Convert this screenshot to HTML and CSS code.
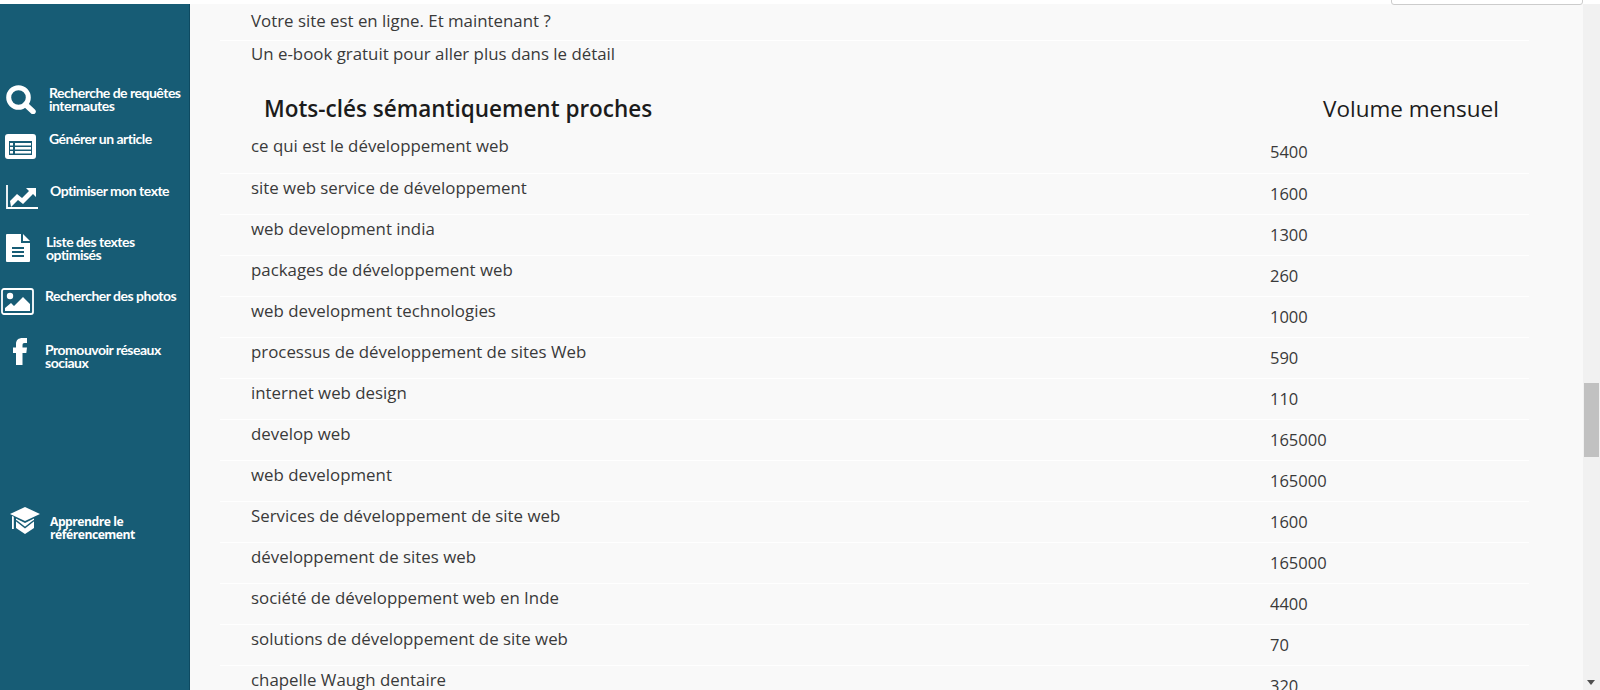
FILE: index.html
```html
<!DOCTYPE html>
<html lang="fr">
<head>
    <meta charset="UTF-8">
    <title>Mots-clés sémantiquement proches</title>
    <link rel="stylesheet" href="styles.css">
</head>
<body>
    <div class="topbar">
        <div class="searchBox"></div>
    </div>
    <div class="page">
        <nav class="sidebar">
            <a class="navItem search">
                <svg class="navIcon" width="30" height="29" viewBox="0 0 30 29"><circle cx="12.500" cy="12.500" r="9.800" fill="none" stroke="#fff" stroke-width="5"/><path d="M19.500 19.500l7.500 7" stroke="#fff" stroke-width="5.500" stroke-linecap="round"/></svg>
                <span class="navLabel">Recherche de requêtes internautes</span>
            </a>
            <a class="navItem article">
                <svg class="navIcon" width="31" height="25" viewBox="0 0 31 25"><rect width="31" height="25" rx="3" fill="#fff"/><path d="M4 7h23v14H4z" fill="#175c75"/><path d="M5 9h3v2.500H5zM10 9h16v2.500H10zM5 13h3v2.500H5zM10 13h16v2.500H10zM5 17h3v2.500H5zM10 17h16v2.500H10z" fill="#fff"/></svg>
                <span class="navLabel">Générer un article</span>
            </a>
            <a class="navItem chart">
                <svg class="navIcon" width="32" height="24" viewBox="0 0 32 24"><path d="M1 0v23h31" fill="none" stroke="#fff" stroke-width="1.800"/><path d="M4 16l7-7 5 4 7-7-3-3h10v9l-3-3-10 10-5-4-7 7z" fill="#fff"/></svg>
                <span class="navLabel">Optimiser mon texte</span>
            </a>
            <a class="navItem list">
                <svg class="navIcon" width="24" height="28" viewBox="0 0 24 28"><path d="M1 0h14v9h9v18a1 1 0 0 1-1 1H1a1 1 0 0 1-1-1V1a1 1 0 0 1 1-1z" fill="#fff"/><path d="M17 0l7 7h-7z" fill="#fff"/><path d="M6 13h12v2H6zM6 17h12v2H6zM6 21h12v2H6z" fill="#175c75"/></svg>
                <span class="navLabel">Liste des textes optimisés</span>
            </a>
            <a class="navItem photos">
                <svg class="navIcon" width="33" height="27" viewBox="0 0 33 27"><rect x="1" y="1" width="31" height="25" rx="2" fill="none" stroke="#fff" stroke-width="1.800"/><circle cx="9" cy="8" r="3.200" fill="#fff"/><path d="M4 23v-3l6-5 3 3 9-9 7 7v7z" fill="#fff"/></svg>
                <span class="navLabel">Rechercher des photos</span>
            </a>
            <a class="navItem facebook">
                <svg class="navIcon" width="14" height="27" viewBox="0 0 14 27"><path d="M3 27V15H0V9.500h3V6C3 2 5.500 0 9.500 0H14v5h-2.500C10 5 9.500 5.800 9.500 7.500v2H14l-.7 5.500H9.500v12z" fill="#fff"/></svg>
                <span class="navLabel">Promouvoir réseaux sociaux</span>
            </a>
            <a class="navItem learn">
                <svg class="navIcon" width="30" height="27" viewBox="0 0 30 27"><path d="M15 0l15 7-15 7L0 7z" fill="#fff"/><path d="M2 9v13h1.800V9.800zM6 11.500V21l9 6 9-6v-9.500l-9 4.500z" fill="#fff"/><path d="M6 13.500l9 7 9-7" fill="none" stroke="#175c75" stroke-width="1.500"/></svg>
                <span class="navLabel learnLabel">Apprendre le référencement</span>
            </a>
        </nav>

        <main class="content">
            <div class="linkRow first">Votre site est en ligne. Et maintenant ?</div>
            <div class="linkRow">Un e-book gratuit pour aller plus dans le détail</div>

            <table class="keywords">
                <tr>
                    <th class="kwHead">Mots-clés sémantiquement proches</th>
                    <th class="volHead">Volume mensuel</th>
                </tr>
                <tr><td>ce qui est le développement web</td><td class="vol">5400</td></tr>
                <tr><td>site web service de développement</td><td class="vol">1600</td></tr>
                <tr><td>web development india</td><td class="vol">1300</td></tr>
                <tr><td>packages de développement web</td><td class="vol">260</td></tr>
                <tr><td>web development technologies</td><td class="vol">1000</td></tr>
                <tr><td>processus de développement de sites Web</td><td class="vol">590</td></tr>
                <tr><td>internet web design</td><td class="vol">110</td></tr>
                <tr><td>develop web</td><td class="vol">165000</td></tr>
                <tr><td>web development</td><td class="vol">165000</td></tr>
                <tr><td>Services de développement de site web</td><td class="vol">1600</td></tr>
                <tr><td>développement de sites web</td><td class="vol">165000</td></tr>
                <tr><td>société de développement web en Inde</td><td class="vol">4400</td></tr>
                <tr><td>solutions de développement de site web</td><td class="vol">70</td></tr>
                <tr><td>chapelle Waugh dentaire</td><td class="vol">320</td></tr>
            </table>
        </main>

        <div class="scrollbar">
            <div class="scrollThumb"></div>
            <div class="scrollArrow"></div>
        </div>
    </div>
</body>
</html>
```

FILE: styles.css
```css
html, body {
    height: 100%;
}

body {
    margin: 0;
    overflow: hidden;
    display: flex;
    flex-direction: column;
    font-family: "Open Sans", sans-serif;
    color: #3a3a3a;
    background-color: #f9f9f9;
}

.topbar {
    position: relative;
    height: 4px;
    flex: none;
    background-color: #fff;
}

.searchBox {
    position: absolute;
    top: -6px;
    left: 1391px;
    width: 190px;
    height: 9px;
    background-color: #fff;
    border: 1px solid #ccc;
    border-radius: 3px;
}

.page {
    display: flex;
    flex: 1;
    min-height: 0;
}

.sidebar {
    flex: none;
    width: 189px;
    padding-top: 81px;
    background-color: #175c75;
    border-top: 1px solid #6d8896;
    border-right: 1px solid #0e4a61;
    box-sizing: content-box;
    margin-top: -1px;
    font-family: Lato, sans-serif;
    font-weight: 700;
    font-size: 14px;
    line-height: 13px;
    letter-spacing: -0.5px;
    color: #fff;
}

.navItem {
    display: flex;
    align-items: flex-start;
}

.navIcon {
    flex: none;
}

.navLabel {
    display: block;
}

.search { height: 49px; padding-left: 6px; }
.search .navIcon { margin-right: 13px; }
.search .navLabel { margin-top: 1px; width: 140px; }

.article { height: 51px; padding-left: 5px; }
.article .navIcon { margin-right: 13px; }
.article .navLabel { margin-top: -2px; }

.chart { height: 49px; padding-left: 6px; }
.chart .navIcon { margin-right: 12px; }
.chart .navLabel { margin-top: -1px; }

.list { height: 54px; padding-left: 6px; }
.list .navIcon { margin-right: 16px; }
.list .navLabel { margin-top: 1px; width: 100px; }

.photos { height: 50px; padding-left: 1px; }
.photos .navIcon { margin-right: 11px; }
.photos .navLabel { margin-top: 1px; }

.facebook { height: 169px; padding-left: 13px; }
.facebook .navIcon { margin-right: 18px; }
.facebook .navLabel { margin-top: 5px; width: 130px; }

.learn { padding-left: 10px; }
.learn .navIcon { margin-right: 10px; }
.learnLabel { margin-top: 8px; width: 100px; font-family: "Open Sans", sans-serif; font-size: 12.2px; }

.content {
    flex: 1;
    min-width: 0;
    padding: 0 54px 0 30px;
}

.linkRow {
    height: 32px;
    box-sizing: border-box;
    padding-left: 31px;
    font-size: 16.85px;
    line-height: 25px;
}

.linkRow.first {
    height: 37px;
    line-height: 33px;
    border-bottom: 1px solid #fff;
}

.keywords {
    width: 100%;
    border-collapse: collapse;
    font-size: 16.85px;
}

.keywords th {
    height: 38px;
    padding: 21px 0 0;
    font-size: 22.5px;
    font-weight: 400;
    text-align: left;
    vertical-align: top;
    line-height: 30px;
    color: #1c1c1c;
}

.keywords th.kwHead {
    padding-left: 44px;
    font-weight: 600;
}

.keywords th.volHead {
    padding-left: 77px;
}

.keywords td {
    height: 41px;
    box-sizing: border-box;
    padding: 0 0 12px 31px;
    line-height: 28px;
    vertical-align: top;
    border-bottom: 1px solid #fff;
}

.keywords td.vol {
    width: 283px;
    padding: 6px 0 0 24px;
    font-size: 16.5px;
}

.scrollbar {
    position: relative;
    flex: none;
    width: 17px;
    background-color: #f1f1f1;
}

.scrollThumb {
    position: absolute;
    top: 379px;
    left: 1px;
    width: 15px;
    height: 74px;
    background-color: #c1c1c1;
}

.scrollArrow {
    position: absolute;
    bottom: 5px;
    left: 4px;
    border-style: solid;
    border-width: 5px 4px 0;
    border-color: #505050 transparent transparent;
}
```
